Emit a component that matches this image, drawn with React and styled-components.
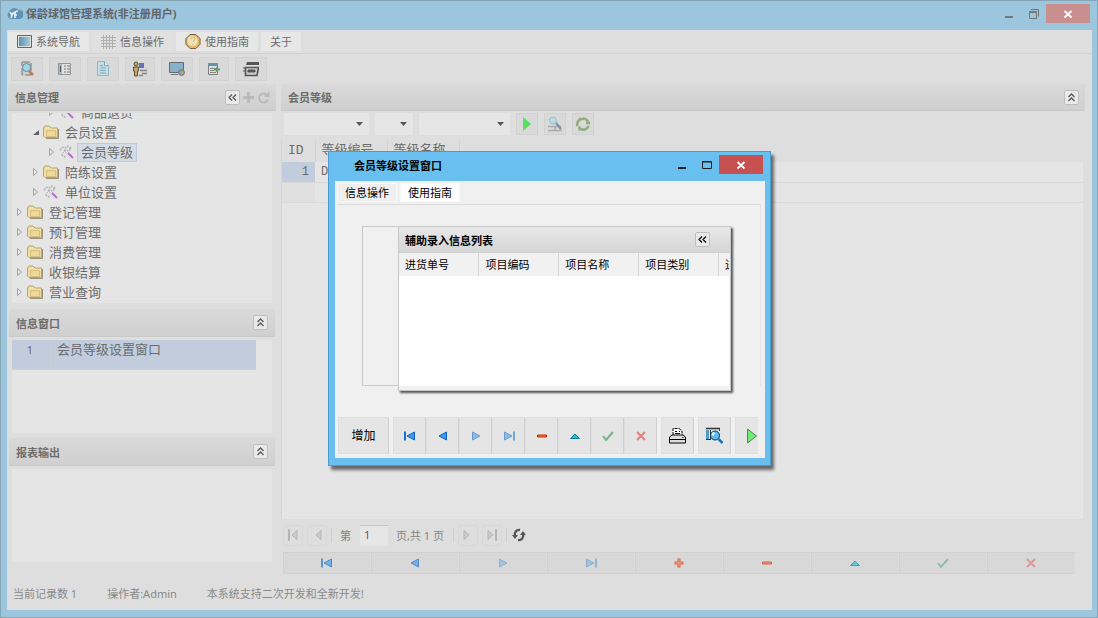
import React from 'react';
import styled, { createGlobalStyle } from 'styled-components';

const GlobalStyle = createGlobalStyle`
  * {
    box-sizing: border-box;
  }

  body {
    margin: 0;
    font: 11px/16px 'Noto Sans', 'Noto Sans CJK SC', sans-serif;
    color: #6c6c6c;
  }

  button, input, select {
    margin: 0;
    padding: 0;
    border: 0;
    font: inherit;
    color: inherit;
    background: none;
  }

  svg {
    display: block;
    flex: none;
  }
`;

const Frame = styled.div`
  display: flex;
  flex-direction: column;
  min-height: 100vh;
  padding: 0 5px 7px 6px;
  border: 1px solid #86a5b4;
  background: #9bc6de;
`;

const TitleBar = styled.header`
  display: flex;
  align-items: flex-start;
  height: 29px;
  padding: 3px 2px 0 0;
`;

const AppTitle = styled.h1`
  display: flex;
  flex: 1;
  align-items: center;
  gap: 3px;
  margin: 0;
  height: 20px;
  font-size: 11px;
  font-weight: bold;
  color: #606468;
`;

const WindowButton = styled.button`
  display: flex;
  align-items: center;
  justify-content: center;
  width: 25px;
  height: 19px;
`;

const CloseButton = styled(WindowButton)`
  width: 44px;
  background: ${({ $inactive }) => ($inactive ? '#c98e8e' : '#c75050')};
`;

const Body = styled.div`
  display: flex;
  flex: 1;
  flex-direction: column;
  background: #dedede;
`;

const MenuBar = styled.nav`
  display: flex;
  gap: 3px;
  height: 24px;
  padding: 2px 1px 3px;
  border-bottom: 1px solid #d3d3d3;
`;

const MenuTab = styled.button`
  display: flex;
  align-items: center;
  gap: 4px;
  height: 19px;
  padding: 0 9px;
  background: ${({ $active }) => ($active ? '#e0e0e0' : '#e7e7e7')};
  white-space: nowrap;
`;

const ToolBar = styled.div`
  display: flex;
  gap: 6px;
  padding: 3px 4px;
  height: 30px;
`;

const ToolButton = styled.button`
  display: flex;
  align-items: center;
  justify-content: center;
  width: ${({ $width }) => $width || 32}px;
  height: 24px;
  border: 1px solid #d2d2d2;
  background: #d9d9d9;
`;

const FilterButton = styled(ToolButton)`
  width: 22px;
  height: 22px;
`;

const Main = styled.main`
  display: flex;
  flex: 1;
  gap: 5px;
  padding: 0 7px 0 1px;
`;

const Sidebar = styled.aside`
  display: flex;
  flex-direction: column;
  flex: none;
  width: 268px;
`;

const PanelHeader = styled.div`
  display: flex;
  align-items: center;
  gap: 2px;
  height: 27px;
  flex: none;
  padding: 0 6px 0 7px;
  border-bottom: 1px solid #c9c9c9;
  background: linear-gradient(#d9d9d9, #d0d0d0);
`;

const SubHeader = styled(PanelHeader)`
  height: 28px;
  margin: 5px 1px 3px;
  padding-right: 7px;
`;

const PanelTitle = styled.h2`
  flex: 1;
  margin: 0;
  padding-top: 2px;
  font-size: 11px;
  line-height: 16px;
  font-weight: bold;
`;

const CollapseButton = styled.button`
  display: flex;
  align-items: center;
  justify-content: center;
  width: 15px;
  height: 15px;
  border: 1px solid #bfbfbf;
  border-radius: 2px;
  background: #e9e9e9;
`;

const IconButton = styled.button`
  display: flex;
`;

const Tree = styled.ul`
  display: flex;
  flex-direction: column;
  justify-content: flex-end;
  height: 190px;
  margin: 2px 4px 1px;
  padding: 0;
  overflow: hidden;
  list-style: none;
  background: #e5e5e5;
`;

const TreeItem = styled.li`
  display: flex;
  flex: none;
  align-items: center;
  gap: 2px;
  height: 20px;
  padding: 0 0 2px ${({ $level }) => $level * 16 + 4}px;
`;

const TreeLabel = styled.span`
  padding: 0 3px;
  border: 1px solid ${({ $selected }) => ($selected ? '#bccbdd' : 'transparent')};
  background: ${({ $selected }) => ($selected ? '#d4dbe5' : 'none')};
  font-size: 13px;
  line-height: 17px;
`;

const SideBox = styled.div`
  height: 93px;
  margin: 0 4px;
  background: #e5e5e5;
`;

const OpenWindow = styled.button`
  display: flex;
  width: 244px;
  height: 30px;
  border-bottom: 1px solid #ccd3dc;
  background: #c1ccdd;
  font-size: 13px;
  line-height: 19px;
  text-align: left;
`;

const OpenIndex = styled.span`
  width: 39px;
  margin-right: 6px;
  padding-right: 2px;
  border-right: 1px solid #c9cfda;
  height: 29px;
  font-size: 11px;
  text-align: center;
`;

const Content = styled.section`
  display: flex;
  flex: 1;
  flex-direction: column;
  min-width: 0;
`;

const FilterBar = styled.div`
  display: flex;
  gap: 6px;
  height: 28px;
  padding: 2px 3px;
`;

const SelectBox = styled.label`
  display: grid;
  align-items: center;
  width: ${({ $width }) => $width}px;
  height: 22px;
  background: #e6e6e6;

  > * {
    grid-area: 1 / 1;
  }

  svg {
    justify-self: end;
    margin-right: 6px;
    pointer-events: none;
  }
`;

const Select = styled.select`
  width: 100%;
  height: 22px;
  appearance: none;
`;

const GridArea = styled.div`
  flex: 1;
  margin-right: 2px;
  border-left: 1px solid #d6d6d6;
  background: #e5e5e5;
`;

const Grid = styled.table`
  width: 100%;
  table-layout: fixed;
  border-collapse: collapse;
  font: 13px/18px 'Liberation Mono', 'Noto Sans CJK SC', monospace;
`;

const GridHead = styled.th`
  width: ${({ $width }) => ($width ? `${$width}px` : 'auto')};
  height: 23px;
  padding: 1px 6px 0;
  border-right: 1px solid #d3d3d3;
  background: #dedede;
  font-size: 13px;
  font-weight: normal;
  text-align: left;
  white-space: nowrap;

  &:last-child {
    border-right: 0;
  }
`;

const GridCell = styled.td`
  height: 20px;
  padding: 0 6px;
  border-bottom: 1px solid #dadada;
  font-size: 12px;
  text-align: ${({ $index }) => ($index ? 'right' : 'left')};
  background: ${({ $index, $selected }) => ($selected ? '#c1ccdd' : $index ? '#e0e0e0' : 'none')};
`;

const Pager = styled.div`
  display: flex;
  align-items: center;
  gap: 4px;
  height: 33px;
  padding: 0 2px 1px;
  color: #858585;
`;

const PagerButton = styled.button`
  display: flex;
  align-items: center;
  justify-content: center;
  width: 20px;
  height: 21px;
  border: 1px solid #d8d8d8;
  border-radius: 4px;
`;

const PagerText = styled.span`
  padding: 2px 5px 0 4px;
  white-space: nowrap;
`;

const PageInput = styled.input`
  width: 28px;
  height: 21px;
  padding: 0 4px 2px;
  border-top: 1px solid #c8c8c8;
  background: #e6e6e6;
  color: #5c5c5c;
`;

const Divider = styled.span`
  width: 1px;
  height: 14px;
  background: #cfcfcf;
`;

const RecordNav = styled.div`
  display: flex;
  height: 22px;
  margin: 0 10px 0 2px;
`;

const RecordButton = styled.button`
  display: flex;
  flex: 1;
  align-items: center;
  justify-content: center;
  border: 1px solid #d1d1d1;
  border-right-color: #dcdcdc;
  background: #d8d8d8;
`;

const StatusBar = styled.footer`
  display: flex;
  gap: 30px;
  height: 36px;
  padding: 12px 6px;
  color: #8a8a8a;
  white-space: nowrap;
`;

const Dialog = styled.div`
  position: absolute;
  top: 151px;
  left: 328px;
  width: 443px;
  padding: 0 5px 7px 6px;
  border: 1px solid #4a9bcb;
  background: #69c0f0;
  box-shadow: 3px 4px 3px rgba(0, 0, 0, 0.55);
  color: #000;
`;

const DialogTitleBar = styled.div`
  display: flex;
  height: 29px;
  padding: 3px 2px 0 19px;
`;

const DialogTitle = styled.h2`
  flex: 1;
  margin: 0;
  font-size: 11px;
  line-height: 22px;
  font-weight: bold;
`;

const DialogBody = styled.div`
  padding: 2px 4px 4px 2px;
  background: #f0f0f0;
`;

const DialogTabs = styled.div`
  display: flex;
  gap: 3px;
  height: 22px;
  padding-bottom: 2px;
  border-bottom: 1px solid #dcdcdc;
`;

const DialogTab = styled.button`
  height: 19px;
  padding: 0 7px;
  border: 1px solid #f7f7f7;
  background: ${({ $active }) => ($active ? '#fff' : '#efefef')};
`;

const DialogContent = styled.div`
  padding: 21px 0 0 25px;
  border-right: 1px solid #e4e4e4;
`;

const GroupBox = styled.div`
  width: 369px;
  height: 160px;
  padding-left: 35px;
  border: 1px solid #c8c8c8;
  border-right: 0;
`;

const ListPanel = styled.section`
  display: flex;
  flex-direction: column;
  height: 165px;
  margin-top: -1px;
  padding-bottom: 4px;
  border: 1px solid #c8c8c8;
  background: #f0f0f0;
  box-shadow: 2px 2px 2px rgba(0, 0, 0, 0.65);
`;

const ListHeader = styled(PanelHeader)`
  height: 26px;
  padding: 0 20px 0 6px;
  border-bottom-color: #d0d0d0;
  background: linear-gradient(#e8e8e8, #d5d5d5);
`;

const ListScroll = styled.div`
  flex: 1;
  margin-right: 1px;
  overflow: hidden;
  background: #fff;
`;

const ListTable = styled.table`
  width: 400px;
  table-layout: fixed;
  border-collapse: collapse;
`;

const ListHead = styled.th`
  height: 23px;
  padding: 0 6px;
  border-right: 1px solid #d8d8d8;
  background: #f1f1f1;
  font-size: 11px;
  font-weight: normal;
  text-align: left;
`;

const DialogFooter = styled.div`
  display: flex;
  gap: 4px;
  margin: 31px 3px 0 1px;
  height: 37px;
  overflow: hidden;
`;

const FooterGroup = styled.div`
  display: flex;
`;

const FooterButton = styled.button`
  display: flex;
  flex: none;
  align-items: center;
  justify-content: center;
  width: ${({ $wide }) => ($wide ? '51px' : '33px')};
  border: 1px solid #dedede;
  border-right-color: #d0d0d0;
  background: #e5e5e5;
  font-size: 12px;
`;

// small navigation marks, drawn on a 14x12 grid
const navShapes = {
  first: <><path d="M1 1.5h2v9H1z" fill="#1272d2" /><path d="M11.5 2v8L4 6z" fill="#3c9bf0" stroke="#0b5fc0" /></>,
  prev: <path d="M10.5 2v8L3 6z" fill="#3c9bf0" stroke="#0b5fc0" />,
  next: <path d="M3.5 2v8L11 6z" fill="#3c9bf0" stroke="#0b5fc0" />,
  last: <><path d="M11 1.5h2v9h-2z" fill="#1272d2" /><path d="M2.5 2v8L10 6z" fill="#3c9bf0" stroke="#0b5fc0" /></>,
  add: <><path d="M7 1.500v9M2.500 6h9" stroke="#d23100" strokeWidth="3" /><path d="M7 2.500v7M3.500 6h7" stroke="#ff8a50" /></>,
  remove: <path d="M2.500 5h9v2h-9z" fill="#ff7d28" stroke="#c82800" />,
  edit: <path d="M2.500 8.500h9L7 4z" fill="#1fc0dc" stroke="#087f9c" />,
  post: <path d="M2 6l3 4 7-8" fill="none" stroke="#178c46" strokeWidth="2" />,
  cancel: <path d="M3 2l8 8M11 2l-8 8" fill="none" stroke="#e02c24" strokeWidth="2" />,
};

const NavIcon = ({ name, opacity = 1 }) => (
  <svg width="14" height="12" viewBox="0 0 14 12" opacity={opacity}>{navShapes[name]}</svg>
);

const Chevrons = ({ up, color = '#555' }) => (
  <svg width="11" height="11" viewBox="0 0 11 11" fill="none" stroke={color} strokeWidth="1.3">
    {up ? <path d="M2.500 5l3-3 3 3M2.500 9l3-3 3 3" /> : <path d="M5 2.500l-3 3 3 3M9 2.500l-3 3 3 3" />}
  </svg>
);

const MinimizeIcon = ({ color }) => (
  <svg width="12" height="12"><path d="M2 8h8v2H2z" fill={color} /></svg>
);

const CrossIcon = () => (
  <svg width="10" height="10"><path d="M1.500 2l7 6.500M8.500 2l-7 6.500" stroke="#fff" strokeWidth="1.800" /></svg>
);

const LogoIcon = () => (
  <svg width="16" height="16" viewBox="0 0 16 16">
    <path d="M4 13a4 4 0 0 1-2-7 6 6 0 0 1 10-2 4.500 4.500 0 0 1 1 9z" fill="#5f93b5" />
    <path d="M3 6l2 3 2-3M5 9l-1 3M8 12V7q0-2 3-2M7 9h3" stroke="#e8eef2" strokeWidth="1.600" fill="none" />
  </svg>
);

const ScreenIcon = () => (
  <svg width="15" height="13" viewBox="0 0 15 13">
    <defs>
      <linearGradient id="screen"><stop stopColor="#5a94b8" /><stop offset="1" stopColor="#a9cbdc" /></linearGradient>
    </defs>
    <path d="M.5.5h14v12H.5z" fill="#ddd" stroke="#626870" />
    <path d="M2 2h11v9H2z" fill="url(#screen)" />
  </svg>
);

const MeshIcon = () => (
  <svg width="15" height="14" viewBox="0 0 15 14" stroke="#b0b0b0">
    <path d="M2.500 0v14M5.500 0v14M8.500 0v14M11.500 0v14M0 2.500h15M0 5.500h15M0 8.500h15M0 11.500h15" />
  </svg>
);

const HelpIcon = () => (
  <svg width="16" height="17" viewBox="0 0 17 17">
    <path d="M5.500 1h6L16 5.500v6L11.500 16h-6L1 11.500v-6z" fill="#e3b860" stroke="#6e5636" />
    <circle cx="8" cy="8" r="5.500" fill="#f3e3ba" />
    <path d="M6.500 6q0-2 2-2t2 2q0 1-2 2.500M8.500 11v1.500" stroke="#d5b676" strokeWidth="1.200" fill="none" />
  </svg>
);

const FolderIcon = () => (
  <svg width="16" height="14" viewBox="0 0 16 14">
    <path d="M.5 3L2 1h4l2 2h6.500v9.500H2L.5 11z" fill="#f0e0a4" stroke="#b9a070" />
    <path d="M3.500 5.500h9v6h-9z" fill="#ebda98" stroke="#d6bd80" />
    <path d="M15.500 4v9.500H3" fill="none" stroke="#9c9282" />
  </svg>
);

const WandIcon = () => (
  <svg width="16" height="14" viewBox="0 0 16 14">
    <path d="M1 5l3-3 3 1 2-2 3 3-3 2-3-1-2 3M3 9l1 3M5 11l2 2M11 2l2 2M6 6l2 2" stroke="#b2b2b2" fill="none" strokeWidth="1.500" strokeDasharray="2 1" />
    <path d="M8 7l6 6" stroke="#b469ca" strokeWidth="1.800" />
    <path d="M7 6l2 2" stroke="#eee" strokeWidth="1.500" />
  </svg>
);

const TreeArrow = ({ open }) => (
  <svg width="9" height="10" viewBox="0 0 9 10">
    {open
      ? <path d="M7 3v5H1z" fill="#606060" />
      : <path d="M1.500 1.500v7L5.500 5z" fill="none" stroke="#a5a5a5" />}
  </svg>
);

const toolIcons = [
  { label: '查找', art: <><path d="M3 1h9v13H3z" fill="#cfcfcf" stroke="#777" strokeDasharray="8 2" /><path d="M10 10l4 4" stroke="#c9764c" strokeWidth="2.500" /><circle cx="7.500" cy="6.500" r="4" fill="#a5d5e5" stroke="#668c9c" /></> },
  { label: '列表', art: <><path d="M1.500 2.500h12v11h-12z" fill="#e2e2e2" stroke="#969696" /><path d="M2 3h3v10H2z" fill="#9bbdd2" /><path d="M3.500 5v6" stroke="#555" /><path d="M7 5h2M7 8h2M7 11h2M10 5h3M10 8h3M10 11h3" stroke="#777" /></> },
  { label: '文档', art: <><path d="M2.500.5h7l4 4v10h-11z" fill="#c3deea" stroke="#92b7c8" /><path d="M9.500.5v4h4" fill="#e6eff3" stroke="#78a8bd" /><path d="M5 4.500h3M5 7h6M5 9.500h6M5 12h6" stroke="#8aa8b8" /></> },
  { label: '员工', width: 30, art: <><circle cx="4" cy="3" r="2" fill="#c9aa68" stroke="#5f5236" /><path d="M1.500 6h5v4h-1v5h-3v-5h-1z" fill="#c6a663" stroke="#5f5236" /><path d="M7 2h6v5H7z" fill="#6a70b8" /><path d="M12.500 2v5" stroke="#d5d5dc" /><path d="M8 9.500h7M10 12.500h5M7 14.500h4" stroke="#858585" strokeWidth="1.500" /></> },
  { label: '网络', art: <><path d="M.5 1.500h14v10H.5z" fill="#85b1c9" stroke="#616b72" /><path d="M2 13.500h7" stroke="#777" /><circle cx="12.500" cy="11.500" r="3" fill="#78a884" stroke="#8b6ba4" /><path d="M11 12l3-2v3z" fill="#d0b064" /></> },
  { label: '导出', width: 30, art: <><path d="M2.500 2.500h9v11h-9z" fill="#ddd" stroke="#808080" /><path d="M2 2h10v3H2z" fill="#6793ad" /><path d="M4 7.500h6M4 9.500h4M4 11.500h6" stroke="#888" /><path d="M8 8.500h6M11 6v5" stroke="#58a268" strokeWidth="1.800" /></> },
  { label: '窗口', art: <><path d="M4 1h12v3H3z" fill="#555" /><path d="M2.500 6.500h13L14 14.500H2.500z" fill="#ccc" stroke="#555" strokeWidth="1.600" /><path d="M5 9h7v2H5zM0 7h3M0 10h3" fill="#555" stroke="#555" /></> },
];

const treeRows = [
  { level: 2, label: '商品退货' },
  { level: 1, label: '会员设置', folder: true, open: true },
  { level: 2, label: '会员等级', selected: true },
  { level: 1, label: '陪练设置', folder: true },
  { level: 1, label: '单位设置' },
  { level: 0, label: '登记管理', folder: true },
  { level: 0, label: '预订管理', folder: true },
  { level: 0, label: '消费管理', folder: true },
  { level: 0, label: '收银结算', folder: true },
  { level: 0, label: '营业查询', folder: true },
];

const navLabels = {
  first: '首条', prev: '上一条', next: '下一条', last: '末条', add: '新增', remove: '删除', edit: '编辑', post: '保存', cancel: '取消',
};

const inactive = ['next', 'last', 'post', 'cancel'];

const DropDown = ({ label, width }) => (
  <SelectBox $width={width}>
    <Select aria-label={label}><option value="" /></Select>
    <svg width="7" height="4"><path d="M0 0h7L3.500 4z" fill="#555" /></svg>
  </SelectBox>
);

const PagerIcon = ({ flip, bar }) => (
  <svg width="12" height="12" viewBox="0 0 12 12">
    <g transform={flip ? 'rotate(180 6 6)' : undefined} stroke="#b5b5b5" fill="#ccc">
      <path d="M10 1.500v9L5 6z" />
      {bar && <path d="M1.500.500h1v11h-1z" />}
    </g>
  </svg>
);

const SettingsDialog = () => (
  <Dialog role="dialog" aria-labelledby="dialog-title">
    <DialogTitleBar>
      <DialogTitle id="dialog-title">会员等级设置窗口</DialogTitle>
      <WindowButton aria-label="最小化"><MinimizeIcon color="#222" /></WindowButton>
      <WindowButton aria-label="最大化">
        <svg width="12" height="10"><path d="M1.500 1.500h9v7h-9zM1 2h10" fill="none" stroke="#222" /></svg>
      </WindowButton>
      <CloseButton aria-label="关闭"><CrossIcon /></CloseButton>
    </DialogTitleBar>
    <DialogBody>
      <DialogTabs>
        <DialogTab>信息操作</DialogTab>
        <DialogTab $active>使用指南</DialogTab>
      </DialogTabs>
      <DialogContent>
        <GroupBox>
          <ListPanel>
            <ListHeader>
              <PanelTitle>辅助录入信息列表</PanelTitle>
              <CollapseButton aria-label="收起列表"><Chevrons color="#111" /></CollapseButton>
            </ListHeader>
            <ListScroll>
              <ListTable>
                <thead>
                  <tr>
                    {['进货单号', '项目编码', '项目名称', '项目类别', '进货数量'].map((name) => (
                      <ListHead key={name}>{name}</ListHead>
                    ))}
                  </tr>
                </thead>
              </ListTable>
            </ListScroll>
          </ListPanel>
        </GroupBox>
      </DialogContent>
      <DialogFooter>
        <FooterButton $wide>增加</FooterButton>
        <FooterGroup>
          {['first', 'prev', 'next', 'last', 'remove', 'edit', 'post', 'cancel'].map((name) => (
            <FooterButton key={name} aria-label={navLabels[name]}>
              <NavIcon name={name} opacity={inactive.includes(name) ? 0.55 : 1} />
            </FooterButton>
          ))}
        </FooterGroup>
        <FooterButton aria-label="打印">
          <svg width="17" height="16" viewBox="0 0 17 16">
            <path d="M4 7V.5h6L13 3v4" fill="#fff" stroke="#000" strokeDasharray="3 1" />
            <path d="M6 3.500h2M10 3.500h1M6 5.500h5" stroke="#000" />
            <path d="M.5 9L3 7h11l2.500 2v6H.5z" fill="#ddd" stroke="#000" />
            <path d="M1 11.500h15" stroke="#000" />
            <path d="M13 9h2v1h-2z" fill="#d22" />
          </svg>
        </FooterButton>
        <FooterButton aria-label="预览">
          <svg width="17" height="17" viewBox="0 0 17 17">
            <path d="M0 1.500h14" stroke="#333" strokeWidth="1.500" />
            <path d="M0 3h3v9H0z" fill="#4f9cc8" />
            <path d="M4.500 3v9M13.500 1v3M0 12.500h5" stroke="#333" fill="none" />
            <circle cx="9" cy="8.500" r="4.500" fill="#5fbdf0" stroke="#10335c" />
            <path d="M8 5.500l-1.500 3" stroke="#e8faff" strokeWidth="2.500" />
            <path d="M12.500 12l4 4" stroke="#1b75b8" strokeWidth="2.500" />
          </svg>
        </FooterButton>
        <FooterButton aria-label="执行">
          <svg width="12" height="16"><path d="M1.500 1v14l9-7z" fill="#6fee76" stroke="#587e58" /></svg>
        </FooterButton>
      </DialogFooter>
    </DialogBody>
  </Dialog>
);

const App = () => (
  <>
    <GlobalStyle />
    <Frame>
      <TitleBar>
        <AppTitle><LogoIcon />保龄球馆管理系统(非注册用户)</AppTitle>
        <WindowButton aria-label="最小化"><MinimizeIcon color="#777" /></WindowButton>
        <WindowButton aria-label="还原">
          <svg width="12" height="12">
            <path d="M1.500 4.500h7v6h-7zM1 3.500h8M3 1.500h7.500v7" fill="none" stroke="#757575" />
          </svg>
        </WindowButton>
        <CloseButton $inactive aria-label="关闭"><CrossIcon /></CloseButton>
      </TitleBar>
      <Body>
        <MenuBar>
          <MenuTab><ScreenIcon />系统导航</MenuTab>
          <MenuTab $active><MeshIcon />信息操作</MenuTab>
          <MenuTab><HelpIcon />使用指南</MenuTab>
          <MenuTab>关于</MenuTab>
        </MenuBar>
        <ToolBar>
          {toolIcons.map(({ label, width, art }) => (
            <ToolButton key={label} $width={width} aria-label={label}>
              <svg width="16" height="16" viewBox="0 0 16 16">{art}</svg>
            </ToolButton>
          ))}
        </ToolBar>
        <Main>
          <Sidebar>
            <PanelHeader>
              <PanelTitle>信息管理</PanelTitle>
              <CollapseButton aria-label="收起"><Chevrons /></CollapseButton>
              <IconButton aria-label="添加">
                <svg width="13" height="13"><path d="M6.500 1v11M1 6.500h11" stroke="#bdb9b9" strokeWidth="3" /></svg>
              </IconButton>
              <IconButton aria-label="刷新">
                <svg width="13" height="13"><path d="M10 4a4.500 4.500 0 1 0 1 4M11.500 1v4h-4" fill="none" stroke="#bdb9b9" strokeWidth="2" /></svg>
              </IconButton>
            </PanelHeader>
            <Tree>
              {treeRows.map((row) => (
                <TreeItem key={row.label} $level={row.level}>
                  <TreeArrow open={row.open} />
                  {row.folder ? <FolderIcon /> : <WandIcon />}
                  <TreeLabel $selected={row.selected}>{row.label}</TreeLabel>
                </TreeItem>
              ))}
            </Tree>
            <SubHeader>
              <PanelTitle>信息窗口</PanelTitle>
              <CollapseButton aria-label="收起信息窗口"><Chevrons up /></CollapseButton>
            </SubHeader>
            <SideBox>
              <OpenWindow><OpenIndex>1</OpenIndex>会员等级设置窗口</OpenWindow>
            </SideBox>
            <SubHeader>
              <PanelTitle>报表输出</PanelTitle>
              <CollapseButton aria-label="收起报表输出"><Chevrons up /></CollapseButton>
            </SubHeader>
            <SideBox />
          </Sidebar>
          <Content>
            <PanelHeader>
              <PanelTitle>会员等级</PanelTitle>
              <CollapseButton aria-label="收起会员等级"><Chevrons up /></CollapseButton>
            </PanelHeader>
            <FilterBar>
              <DropDown label="字段" width={85} />
              <DropDown label="条件" width={38} />
              <DropDown label="值" width={91} />
              <FilterButton aria-label="执行">
                <svg width="10" height="14"><path d="M1 0v14l8-7z" fill="#55e05d" /></svg>
              </FilterButton>
              <FilterButton aria-label="查询">
                <svg width="16" height="16" viewBox="0 0 16 16">
                  <path d="M1 10.500h13M1 14.500h14M8 11v4" stroke="#aaa" strokeWidth="1.500" />
                  <path d="M9 7l5 6" stroke="#7795ab" strokeWidth="2.400" />
                  <circle cx="6" cy="4.500" r="3.500" fill="#b7dbe8" stroke="#9cbccb" />
                </svg>
              </FilterButton>
              <FilterButton aria-label="刷新">
                <svg width="16" height="16" viewBox="0 0 16 16" fill="none" stroke="#8fae7c" strokeWidth="2.600">
                  <path d="M2.500 10a5.500 5.500 0 0 1 3.500-7M8 2.500a5.500 5.500 0 0 1 5.500 5M13.500 10a5.500 5.500 0 0 1-8.500 2.500" />
                  <path d="M11 7h4M4.500 10.500v4M4 3h4" />
                </svg>
              </FilterButton>
            </FilterBar>
            <GridArea>
              <Grid>
                <thead>
                  <tr>
                    <GridHead $width={33}>ID</GridHead>
                    <GridHead $width={72}>等级编号</GridHead>
                    <GridHead $width={72}>等级名称</GridHead>
                    <GridHead />
                  </tr>
                </thead>
                <tbody>
                  <tr>
                    <GridCell $index $selected>1</GridCell>
                    <GridCell>D</GridCell>
                    <GridCell />
                    <GridCell />
                  </tr>
                  <tr>
                    <GridCell $index />
                    <GridCell />
                    <GridCell />
                    <GridCell />
                  </tr>
                </tbody>
              </Grid>
            </GridArea>
            <Pager>
              <PagerButton aria-label="第一页"><PagerIcon bar /></PagerButton>
              <PagerButton aria-label="上一页"><PagerIcon /></PagerButton>
              <Divider />
              <PagerText>第</PagerText>
              <PageInput aria-label="页码" defaultValue="1" />
              <PagerText>页,共 1 页</PagerText>
              <Divider />
              <PagerButton aria-label="下一页"><PagerIcon flip /></PagerButton>
              <PagerButton aria-label="最后一页"><PagerIcon flip bar /></PagerButton>
              <Divider />
              <IconButton aria-label="重新载入">
                <svg width="16" height="14" viewBox="0 0 16 14" fill="none" stroke="#555" strokeWidth="2.400">
                  <path d="M4 8a4.500 4.500 0 0 1 5-6M12 6a4.500 4.500 0 0 1-5 6" />
                  <path d="M1 7h6l-3 4zM9 7h6l-3-4z" fill="#555" stroke="none" />
                </svg>
              </IconButton>
            </Pager>
            <RecordNav>
              {Object.keys(navLabels).map((name) => (
                <RecordButton key={name} aria-label={navLabels[name]}>
                  <NavIcon name={name} opacity={inactive.includes(name) ? 0.35 : 0.65} />
                </RecordButton>
              ))}
            </RecordNav>
          </Content>
        </Main>
        <StatusBar>
          <span>当前记录数 1</span>
          <span>操作者:Admin</span>
          <span>本系统支持二次开发和全新开发!</span>
        </StatusBar>
      </Body>
    </Frame>
    <SettingsDialog />
  </>
);

export default App;
